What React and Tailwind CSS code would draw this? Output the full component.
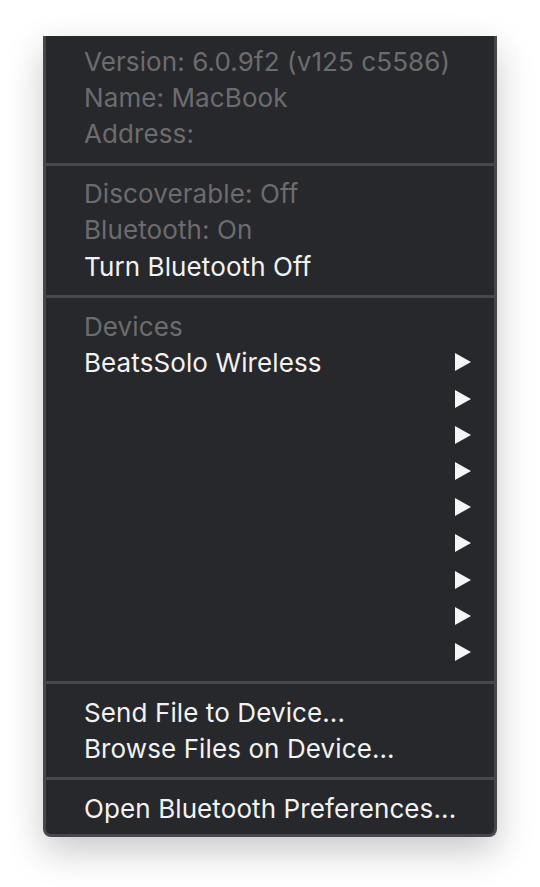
import React from 'react';

const rowClass = 'h-[36.2px] flex items-center pl-[38px] pr-[23px]';

function Row({ children, disabled, arrow }) {
  return (
    <div className={rowClass}>
      <span className={disabled ? 'flex-1 text-[#6c6c6f]' : 'flex-1 text-[#f2f2f2]'}>{children}</span>
      {arrow && (
        <svg width="16" height="18" viewBox="0 0 16 18" className="shrink-0">
          <path d="M0 0 L16 9 L0 18 Z" fill="#f5f5f5" />
        </svg>
      )}
    </div>
  );
}

function Separator() {
  return <div className="mt-[11px] mb-[10px] h-[3px] bg-[#48484b]" />;
}

export default function App() {
  return (
    <div className="min-h-screen bg-white pt-[36px]" style={{ fontFamily: 'Inter, "Noto Sans", sans-serif' }}>
      <div className="ml-[43px] w-[454px] bg-[#27282b] border-x-[3px] border-b-[3px] border-[#46474a] rounded-b-[8px] pt-[7px] pb-[7px] text-[26px] tracking-[0.1px] shadow-[0_14px_36px_rgba(0,0,0,0.22)]">
        <Row disabled>Version: 6.0.9f2 (v125 c5586)</Row>
        <Row disabled>Name: MacBook</Row>
        <Row disabled>Address:</Row>
        <Separator />
        <Row disabled>Discoverable: Off</Row>
        <Row disabled>Bluetooth: On</Row>
        <Row>Turn Bluetooth Off</Row>
        <Separator />
        <Row disabled>Devices</Row>
        <Row arrow>BeatsSolo Wireless</Row>
        <Row arrow />
        <Row arrow />
        <Row arrow />
        <Row arrow />
        <Row arrow />
        <Row arrow />
        <Row arrow />
        <Row arrow />
        <Separator />
        <Row>Send File to Device...</Row>
        <Row>Browse Files on Device...</Row>
        <Separator />
        <Row>Open Bluetooth Preferences...</Row>
      </div>
    </div>
  );
}
